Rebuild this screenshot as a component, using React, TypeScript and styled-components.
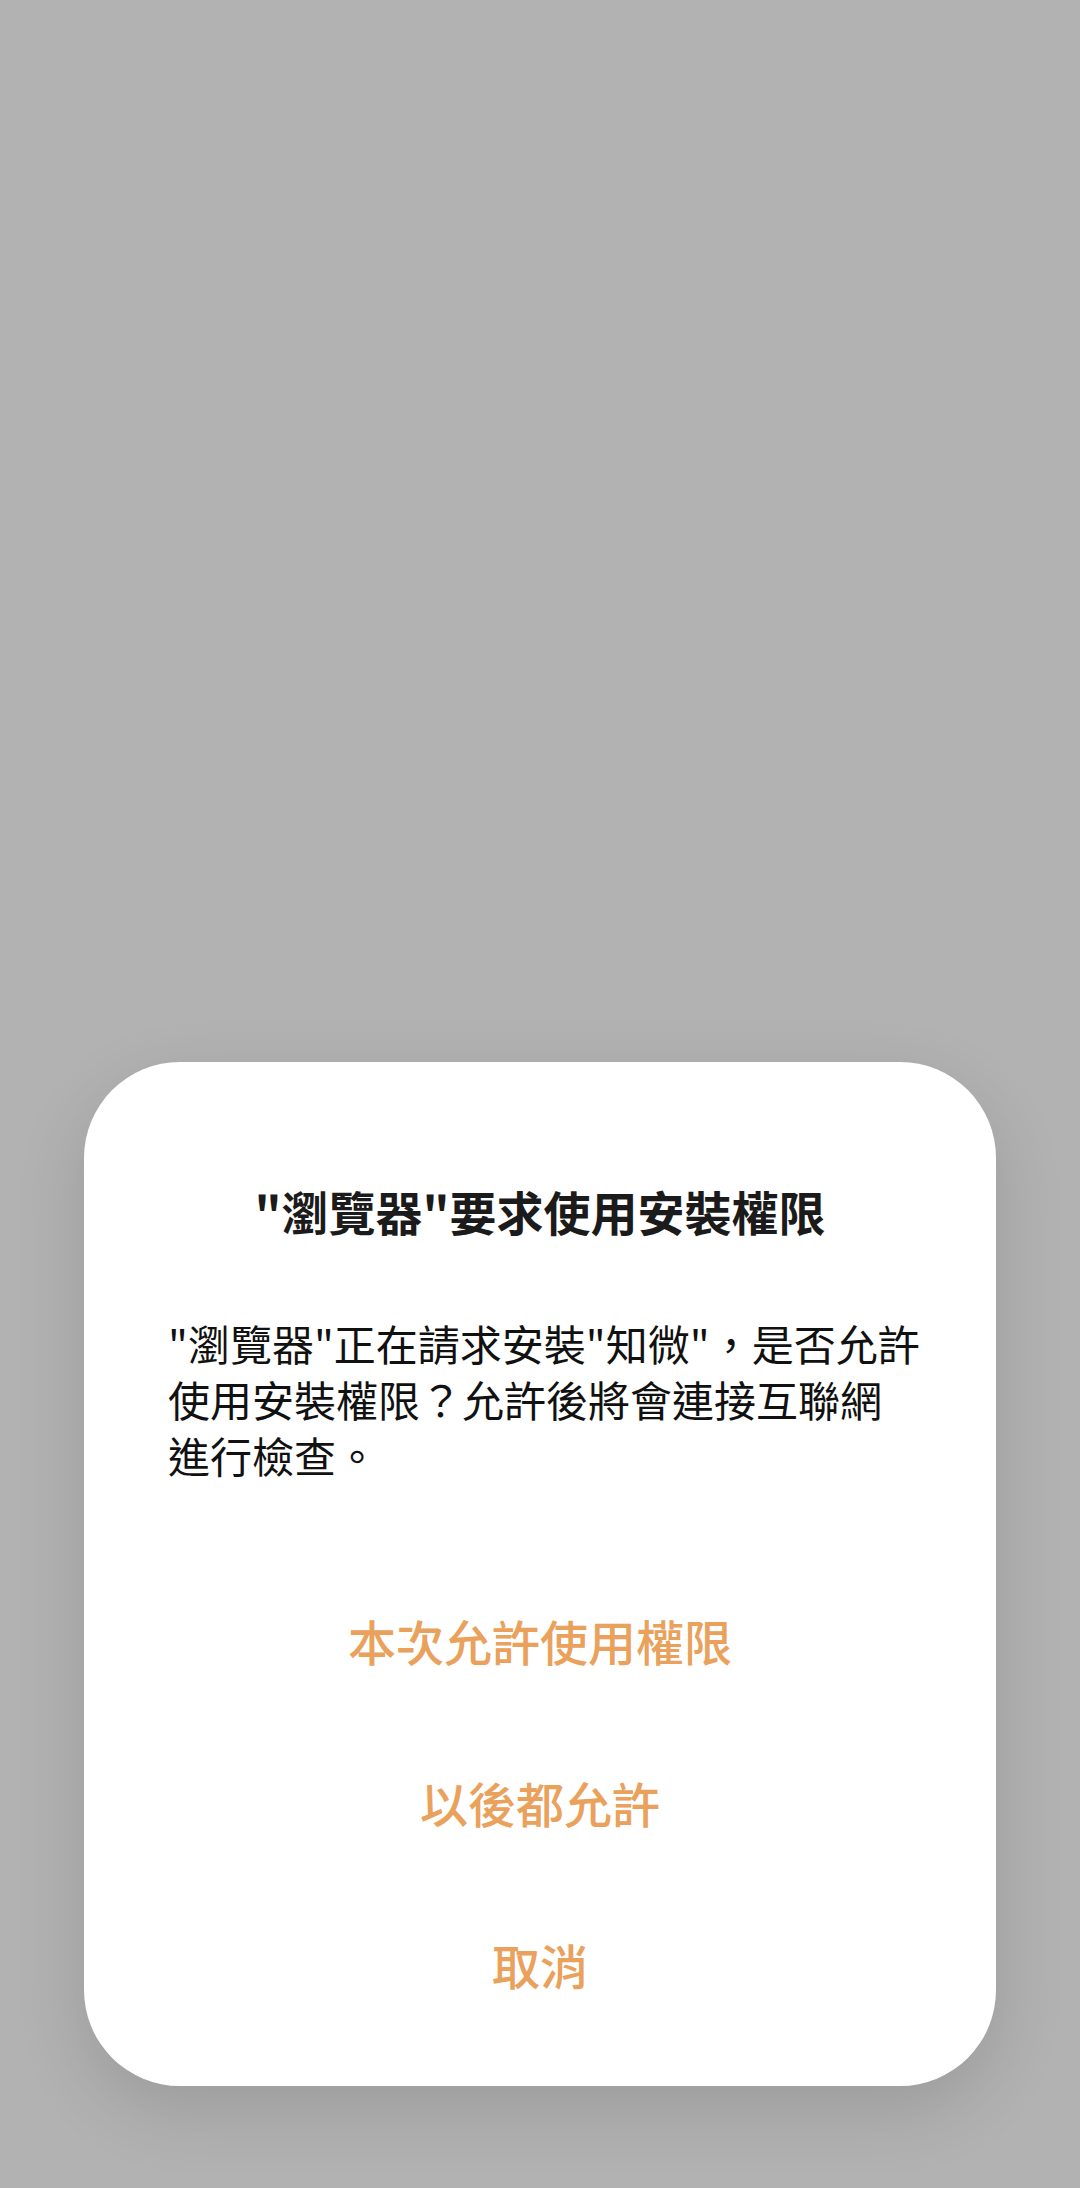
import React from "react";
import styled, { createGlobalStyle } from "styled-components";

const Global = createGlobalStyle`
  html, body {
    margin: 0;
    padding: 0;
    background: #b2b2b2;
  }
  body {
    font-family: "Noto Sans CJK TC", "Noto Sans CJK SC", "Noto Sans", sans-serif;
  }
`;

const Screen = styled.div`
  width: 1080px;
  height: 2188px;
  background: #b2b2b2;
  display: flex;
  flex-direction: column;
  justify-content: flex-end;
  align-items: center;
  padding-bottom: 102px;
  box-sizing: border-box;
`;

const Dialog = styled.div`
  width: 912px;
  box-sizing: border-box;
  background: #ffffff;
  border-radius: 96px;
  box-shadow: 0 24px 70px rgba(0, 0, 0, 0.13);
  padding: 117px 0 41px;
  display: flex;
  flex-direction: column;
`;

const Title = styled.h1`
  margin: 0;
  font-size: 47px;
  line-height: 64px;
  font-weight: 700;
  color: #1b1b1b;
  text-align: center;
`;

const Body = styled.p`
  margin: 72px 0 0;
  padding: 0 74px 0 84px;
  font-size: 42px;
  line-height: 56px;
  font-weight: 400;
  color: #111111;
  text-align: left;
`;

const Actions = styled.div`
  margin-top: 76px;
  display: flex;
  flex-direction: column;
`;

const Action = styled.button`
  height: 162px;
  border: none;
  background: transparent;
  padding: 0;
  font-family: inherit;
  font-size: 48px;
  font-weight: 500;
  color: #e9a15c;
  text-align: center;
  cursor: pointer;
`;

export default function App() {
  return (
    <>
      <Global />
      <Screen>
        <Dialog>
          <Title>"瀏覽器"要求使用安裝權限</Title>
          <Body>
            "瀏覽器"正在請求安裝"知微"，是否允許使用安裝權限？允許後將會連接互聯網進行檢查。
          </Body>
          <Actions>
            <Action>本次允許使用權限</Action>
            <Action>以後都允許</Action>
            <Action>取消</Action>
          </Actions>
        </Dialog>
      </Screen>
    </>
  );
}
